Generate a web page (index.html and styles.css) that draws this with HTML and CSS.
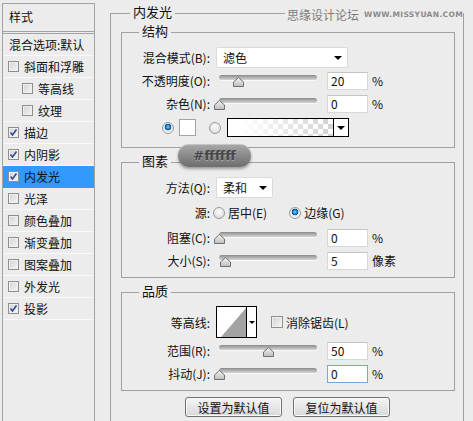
FILE: index.html
```html
<!DOCTYPE html>
<html lang="zh-CN">

<head>
    <meta charset="UTF-8">
    <meta name="viewport" content="width=device-width, initial-scale=1.0">
    <title>图层样式 - 内发光</title>
    <link rel="stylesheet" href="styles.css">
</head>

<body>
    <div class="dialog">
        <aside class="style-list">
            <div class="list-head">样式</div>
            <ul class="list">
                <li class="item blend">混合选项:默认</li>
                <li class="item"><span class="check"></span>斜面和浮雕</li>
                <li class="item sub"><span class="check"></span>等高线</li>
                <li class="item sub"><span class="check"></span>纹理</li>
                <li class="item"><span class="check on"></span>描边</li>
                <li class="item"><span class="check on"></span>内阴影</li>
                <li class="item active"><span class="check on"></span>内发光</li>
                <li class="item"><span class="check"></span>光泽</li>
                <li class="item"><span class="check"></span>颜色叠加</li>
                <li class="item"><span class="check"></span>渐变叠加</li>
                <li class="item"><span class="check"></span>图案叠加</li>
                <li class="item"><span class="check"></span>外发光</li>
                <li class="item"><span class="check on"></span>投影</li>
            </ul>
        </aside>

        <section class="panel">
            <div class="panel-title">内发光</div>
            <div class="watermark"><span class="wm-cn">思缘设计论坛</span><span class="wm-en">WWW.MISSYUAN.COM</span></div>
            <div class="tooltip">#ffffff</div>

            <!-- 结构 -->
            <div class="group group-structure">
                <div class="group-title">结构</div>
                <div class="row">
                    <span class="label">混合模式(B):</span>
                    <div class="select select-wide"><span>滤色</span><i class="arrow"></i></div>
                </div>
                <div class="row">
                    <span class="label">不透明度(O):</span>
                    <div class="slider"><div class="track"></div><svg class="thumb" style="left: 19px" width="11" height="10" viewBox="0 0 11 10"><use href="#thumb" /></svg></div>
                    <div class="field">20</div>
                    <span class="unit">%</span>
                </div>
                <div class="row">
                    <span class="label">杂色(N):</span>
                    <div class="slider"><div class="track"></div><svg class="thumb" style="left: 0px" width="11" height="10" viewBox="0 0 11 10"><use href="#thumb" /></svg></div>
                    <div class="field">0</div>
                    <span class="unit">%</span>
                </div>
                <div class="row row-color">
                    <span class="radio on"></span>
                    <span class="swatch"></span>
                    <span class="radio radio-grad"></span>
                    <div class="gradient"><span class="grad-fill"></span><span class="grad-btn"><i class="arrow"></i></span></div>
                </div>
            </div>

            <!-- 图素 -->
            <div class="group group-elements">
                <div class="group-title">图素</div>
                <div class="row">
                    <span class="label">方法(Q):</span>
                    <div class="select select-small"><span>柔和</span><i class="arrow"></i></div>
                </div>
                <div class="row row-source">
                    <span class="label">源:</span>
                    <span class="radio radio-src"></span><span class="opt">居中(E)</span>
                    <span class="radio radio-src radio-edge on"></span><span class="opt">边缘(G)</span>
                </div>
                <div class="row">
                    <span class="label">阻塞(C):</span>
                    <div class="slider"><div class="track"></div><svg class="thumb" style="left: 0px" width="11" height="10" viewBox="0 0 11 10"><use href="#thumb" /></svg></div>
                    <div class="field">0</div>
                    <span class="unit">%</span>
                </div>
                <div class="row">
                    <span class="label">大小(S):</span>
                    <div class="slider"><div class="track"></div><svg class="thumb" style="left: 6px" width="11" height="10" viewBox="0 0 11 10"><use href="#thumb" /></svg></div>
                    <div class="field">5</div>
                    <span class="unit">像素</span>
                </div>
            </div>

            <!-- 品质 -->
            <div class="group group-quality">
                <div class="group-title">品质</div>
                <div class="row row-contour">
                    <span class="label">等高线:</span>
                    <div class="contour">
                        <svg class="contour-img" width="29" height="30" viewBox="0 0 29 30">
                            <rect width="29" height="30" fill="#fff" />
                            <polygon points="4,30 29,1 29,30" fill="#a3a3a3" />
                        </svg>
                        <span class="contour-btn"><i class="arrow arrow-small"></i></span>
                    </div>
                    <span class="check aa"></span><span class="opt">消除锯齿(L)</span>
                </div>
                <div class="row">
                    <span class="label">范围(R):</span>
                    <div class="slider"><div class="track"></div><svg class="thumb" style="left: 49px" width="11" height="10" viewBox="0 0 11 10"><use href="#thumb" /></svg></div>
                    <div class="field">50</div>
                    <span class="unit">%</span>
                </div>
                <div class="row">
                    <span class="label">抖动(J):</span>
                    <div class="slider"><div class="track"></div><svg class="thumb" style="left: 0px" width="11" height="10" viewBox="0 0 11 10"><use href="#thumb" /></svg></div>
                    <div class="field focus">0</div>
                    <span class="unit">%</span>
                </div>
            </div>

            <div class="buttons">
                <button class="btn" type="button">设置为默认值</button>
                <button class="btn" type="button">复位为默认值</button>
            </div>
        </section>
    </div>

    <svg width="0" height="0" class="defs">
        <defs>
            <linearGradient id="thumbFill" x1="0" y1="0" x2="0" y2="1">
                <stop offset="0" stop-color="#f4f4f4" />
                <stop offset="1" stop-color="#bdbdbd" />
            </linearGradient>
            <symbol id="thumb" viewBox="0 0 11 10">
                <polygon points="5.5,0.5 10.5,5 10.5,9.5 0.5,9.5 0.5,5" fill="url(#thumbFill)" stroke="#6f6f6f" />
            </symbol>
        </defs>
    </svg>
</body>

</html>
```

FILE: styles.css
```css
* {
    margin: 0;
    padding: 0;
    box-sizing: border-box;
}

body {
    background-color: #ececec;
    font-family: "Noto Sans CJK SC", "Liberation Sans", sans-serif;
    font-size: 12px;
    color: #111;
    overflow: hidden;
    height: 421px;
}

.defs {
    position: absolute;
}

.dialog {
    display: flex;
    align-items: flex-start;
}

/* left list */
.style-list {
    margin: 3px 0 0 2px;
    width: 93px;
    height: 418px;
    border: 1px solid #a3a3a3;
    border-bottom: none;
}

.list-head {
    height: 28px;
    line-height: 26px;
    padding-left: 6px;
    border-bottom: 1px solid #a3a3a3;
}

.list {
    list-style: none;
    margin-top: 1px;
    border-top: 1px solid #a3a3a3;
}

.item {
    display: flex;
    align-items: center;
    height: 22px;
    padding-left: 5px;
    border-bottom: 1px solid #f9f9f9;
    white-space: nowrap;
}

.item.blend {
    padding-left: 6px;
}

.item.sub {
    padding-left: 19px;
}

.item.active {
    background-color: #3399ff;
    border-bottom-color: #3399ff;
}

.check {
    flex: none;
    width: 11px;
    height: 11px;
    margin-right: 5px;
    border: 1px solid #8e8f8f;
    background: linear-gradient(135deg, #d2d2d2, #f6f6f6);
    box-shadow: inset 0 0 0 1px #f0f0f0;
}

.check.on {
    background: url("data:image/svg+xml,%3Csvg xmlns='http://www.w3.org/2000/svg' width='9' height='9'%3E%3Cpath d='M1.5 4.5 L3.5 7 L7.5 1.5' fill='none' stroke='%23304a9a' stroke-width='1.6'/%3E%3C/svg%3E") no-repeat center, linear-gradient(135deg, #d2d2d2, #f6f6f6);
}

/* right panel */
.panel {
    position: relative;
    margin: 13px 0 0 15px;
    width: 354px;
    height: 408px;
    border: 1px solid #a0a0a0;
    border-bottom: none;
}

.panel-title {
    width: max-content;
    height: 16px;
    line-height: 16px;
    margin: -10px 0 -6px 19px;
    padding: 0 3px;
    font-size: 13px;
    background-color: #ececec;
}

.watermark {
    position: absolute;
    top: -8px;
    right: 0;
    display: flex;
    align-items: center;
    height: 16px;
    padding-left: 2px;
    background-color: #ececec;
    color: #7c7c7c;
}

.wm-cn {
    font-size: 12px;
}

.wm-en {
    margin-left: 5px;
    font-family: "DejaVu Sans", sans-serif;
    font-size: 7.5px;
    font-weight: bold;
    letter-spacing: 0.35px;
    color: #8a8a8a;
}

.tooltip {
    position: absolute;
    left: 67px;
    top: 130px;
    width: 73px;
    height: 23px;
    border-radius: 11px;
    background: linear-gradient(#a9a9a9, #8a8a8a 50%, #6d6d6d);
    box-shadow: 0 2px 3px rgba(0, 0, 0, 0.35), inset 0 1px 0 rgba(255, 255, 255, 0.35);
    color: #474747;
    text-shadow: 0 1px 0 rgba(255, 255, 255, 0.3);
    font-family: "DejaVu Sans", sans-serif;
    font-weight: bold;
    font-size: 13px;
    line-height: 23px;
    text-align: center;
    z-index: 2;
}

.group {
    margin: 18px 8px 0 10px;
    border: 1px solid #a0a0a0;
}

.group-elements,
.group-quality {
    margin-top: 14px;
}

.group-title {
    width: max-content;
    height: 16px;
    line-height: 16px;
    margin: -10px 0 7px 17px;
    padding: 0 3px;
    font-size: 13px;
    background-color: #ececec;
}

.group-structure {
    padding-bottom: 8px;
}

.group-elements {
    padding-bottom: 5px;
}

.group-quality {
    padding-bottom: 5px;
}

.row {
    display: flex;
    align-items: center;
    height: 23px;
}

.label {
    flex: none;
    width: 88px;
    text-align: right;
    white-space: nowrap;
}

.select {
    display: flex;
    align-items: center;
    justify-content: space-between;
    margin-left: 6px;
    height: 21px;
    padding: 0 5px 0 6px;
    background-color: #fff;
    border: 1px solid #dadada;
    border-radius: 2px;
}

.select-wide {
    width: 132px;
}

.select-small {
    width: 57px;
}

.arrow {
    display: block;
    width: 0;
    height: 0;
    border-left: 4px solid transparent;
    border-right: 4px solid transparent;
    border-top: 4px solid #000;
}

.arrow-small {
    border-left-width: 3px;
    border-right-width: 3px;
    border-top-width: 3px;
}

.slider {
    position: relative;
    flex: none;
    width: 108px;
    height: 12px;
    margin-left: 4px;
}

.track {
    margin: 0 5px;
    width: 98px;
    height: 5px;
    border-radius: 3px;
    background: linear-gradient(#8a8a8a, #b9b9b9 60%, #d4d4d4);
    box-shadow: 0 1px 0 #f8f8f8;
}

.thumb {
    position: absolute;
    top: 2px;
}

.field {
    flex: none;
    margin-left: 5px;
    width: 41px;
    height: 18px;
    line-height: 16px;
    padding-left: 3px;
    background-color: #fff;
    border: 1px solid #d7d7d7;
    border-top-color: #c4c4c4;
}

.field.focus {
    border-color: #7aa5d6;
}

.unit {
    margin-left: 4px;
}

.row-color {
    height: 23px;
    margin-top: 1px;
    padding-left: 40px;
}

.radio {
    flex: none;
    width: 12px;
    height: 12px;
    border-radius: 50%;
    border: 1px solid #9a9a9a;
    background: radial-gradient(circle at 50% 35%, #fdfdfd, #d4d4d4);
}

.radio.on {
    background: radial-gradient(circle at 50% 40%, #8fd2ff 0, #1f7fc4 2px, #0b4c86 3px, #d6e7f3 3.6px, #f2f2f2 5px);
}

.swatch {
    flex: none;
    margin-left: 5px;
    width: 17px;
    height: 17px;
    background-color: #fff;
    border: 1px solid #a3a3a3;
}

.radio-grad {
    margin-left: 13px;
}

.gradient {
    display: flex;
    margin-left: 6px;
    width: 122px;
    height: 19px;
    border: 1px solid #000;
}

.grad-fill {
    flex: 1;
    background-image: linear-gradient(to right, #fff 10%, rgba(255, 255, 255, 0)), conic-gradient(#d2d2d2 25%, #fff 0 50%, #d2d2d2 0 75%, #fff 0);
    background-size: 100% 100%, 10px 10px;
}

.grad-btn {
    display: flex;
    align-items: center;
    justify-content: center;
    width: 15px;
    border-left: 1px solid #000;
    background-color: #fff;
}

.row-source {
    height: 27px;
}

.radio-src {
    margin-left: 3px;
}

.radio-edge {
    margin-left: 22px;
}

.opt {
    margin-left: 3px;
    white-space: nowrap;
}

.row-contour {
    height: 32px;
    margin-bottom: 1px;
}

.contour {
    display: flex;
    margin-left: 6px;
    width: 41px;
    height: 32px;
    border: 1px solid #000;
    background-color: #fff;
}

.contour-img {
    display: block;
}

.contour-btn {
    display: flex;
    align-items: center;
    justify-content: center;
    flex: 1;
    border-left: 1px solid #000;
}

.check.aa {
    width: 12px;
    height: 12px;
    margin: 0 0 0 14px;
}

.buttons {
    display: flex;
    justify-content: center;
    gap: 11px;
    margin-top: 6px;
    padding-left: 1px;
}

.btn {
    width: 97px;
    height: 20px;
    font-family: "Noto Sans CJK SC", sans-serif;
    font-size: 12px;
    color: #111;
    border: 1px solid #707070;
    border-radius: 3px;
    background: linear-gradient(#f5f5f5, #e6e6e6 50%, #d8d8d8);
    box-shadow: inset 0 0 0 1px #fbfbfb;
}
```
